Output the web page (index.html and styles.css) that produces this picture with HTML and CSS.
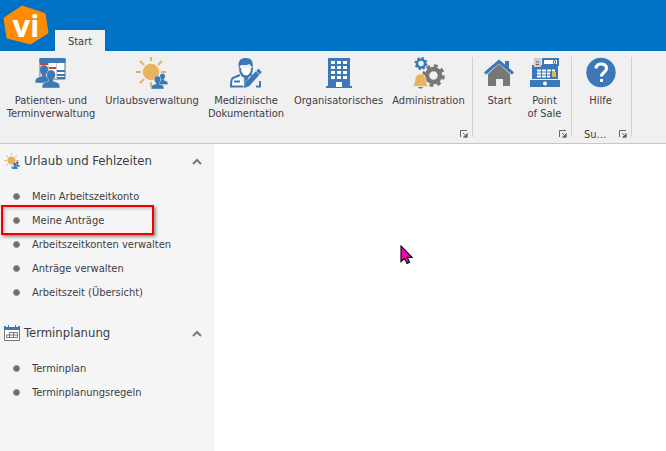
FILE: index.html
```
<!DOCTYPE html>
<html lang="de">
<head>
<meta charset="utf-8">
<title>vi</title>
<link rel="stylesheet" href="styles.css">
</head>
<body>
<svg class="defs" aria-hidden="true">
  <symbol id="person" viewBox="0 0 18 18">
    <path d="M9 0c3 0 4.600 2 4.400 5-.1 1.900-1 3.600-2.200 4.600v1.600c2.800.8 5.300 1.400 6 3 .6 1.400.6 2.800.6 3.800H.2c0-1 0-2.400.6-3.800.7-1.600 3.200-2.200 6-3V9.600C5.600 8.600 4.700 6.900 4.600 5 4.400 2 6 0 9 0z"/>
  </symbol>
  <symbol id="sun" viewBox="0 0 32 32">
    <circle cx="15" cy="15" r="8.200" fill="#e8b35f"/>
    <path d="M15 0v4M15 25v5M0 15h5M25 15h5M4 4l4 4M26 4l-4 4M4 26l4-4" stroke="#e8b35f" stroke-width="2"/>
    <g fill="#3b78b5" stroke="#f0f0f0" stroke-width=".5">
      <use href="#person" x="21" y="16" width="11" height="12"/>
      <use href="#person" x="15" y="19" width="13" height="13"/>
    </g>
  </symbol>
  <symbol id="launch" viewBox="0 0 8 8">
    <path d="M.5 7V.5H7M3 3l3.500 3.500M7 3.500V7H3.500" fill="none" stroke="#666"/>
    <path d="M7.500 3v4.500H3z" fill="#666"/>
  </symbol>
  <symbol id="chevron" viewBox="0 0 10 7">
    <path d="M1 6l4-4 4 4" fill="none" stroke="#777" stroke-width="2"/>
  </symbol>
</svg>

<header class="titlebar">
  <svg class="logo" viewBox="0 0 48 42" role="img" aria-label="vi">
    <path d="M20 2L43 9.500 46 29 28.500 40 5 34 2 14z" fill="#ff8c00" stroke="#ff8c00" stroke-linejoin="round"/>
    <text x="24" y="33" text-anchor="middle" class="logo-text">vi</text>
  </svg>
  <button class="tab" type="button">Start</button>
</header>

<nav class="ribbon" aria-label="Menüband">
  <section class="group group-main">
    <div class="tools">
      <button type="button" class="tool tool-l">
        <svg class="icon" viewBox="0 0 32 32">
          <path d="M5 2h25v20H5z" fill="#fff" stroke="#666"/>
          <path d="M4.500 1h26v5h-26z" fill="#3b78b5"/>
          <path d="M13.500 6v16M21.500 6v16" stroke="#ccc"/>
          <path d="M5 7h8M14 11h7" stroke="#cf432c" stroke-width="2"/>
          <path d="M22 14h8M22 18h8M22 21h8" stroke="#3b78b5" stroke-width="2"/>
          <g fill="#3b78b5" stroke="#f0f0f0" stroke-width=".4">
            <use href="#person" x="0" y="8" width="18" height="18"/>
            <use href="#person" x="7" y="13" width="18" height="18"/>
          </g>
        </svg>
        <span>Patienten- und<br>Terminverwaltung</span>
      </button>
      <button type="button" class="tool tool-l">
        <svg class="icon"><use href="#sun"/></svg>
        <span>Urlaubsverwaltung</span>
      </button>
      <button type="button" class="tool tool-m">
        <svg class="icon" viewBox="0 0 32 32">
          <path d="M10 11c0 5 2.500 8.500 6 8.500s6-3.500 6-8.500M10 18l-7 3c-2 1-2 5-2 8.500h12M21 18l4 2M26 29.500h4V24" fill="#fff" stroke="#3b78b5" stroke-width="2"/>
          <path d="M9 12C7 3 11 1 16 1s8 3 6.500 11c-1-3-2-4-3.500-5-2 1.500-6 1-8 1-1 1-1.500 2-2 4z" fill="#3b78b5"/>
          <path d="M11 18l5 4 5-4M16 20v4" fill="none" stroke="#3b78b5"/>
          <path d="M14.500 20h3l1.500 7-3 3-2-3z" fill="#3b78b5"/>
          <path d="M4 24.500h6" stroke="#3b78b5" stroke-width="2"/>
          <path d="M13 31.500l2-6L28.500 11.500l3.500 3.500L19 29.500z" fill="#3b78b5" stroke="#f0f0f0" stroke-width=".4"/>
          <path d="M26 14l4 4" stroke="#f0f0f0" stroke-width=".7"/>
        </svg>
        <span>Medizinische<br>Dokumentation</span>
      </button>
      <button type="button" class="tool tool-l">
        <svg class="icon" viewBox="0 0 32 32">
          <path d="M5 1h22v28h2v2H3v-2h2z" fill="#3b78b5"/>
          <path d="M8 5.500h16M8 10.500h16M8 15.500h16M8 20.500h16" stroke="#fff" stroke-width="3" stroke-dasharray="4 2"/>
          <path d="M13 25h6v5h-6z" fill="#fff"/>
        </svg>
        <span>Organisatorisches</span>
      </button>
      <button type="button" class="tool tool-m">
        <svg class="icon" viewBox="0 0 32 32">
          <circle cx="8" cy="6.500" r="4" fill="none" stroke="#3b78b5" stroke-width="2.500"/>
          <circle cx="8" cy="6.500" r="5.500" fill="none" stroke="#3b78b5" stroke-width="2" stroke-dasharray="2.160 2.160"/>
          <circle cx="20.500" cy="18.500" r="6.500" fill="none" stroke="#777" stroke-width="4.500"/>
          <circle cx="20.500" cy="18.500" r="9.800" fill="none" stroke="#777" stroke-width="3" stroke-dasharray="3.850 3.850"/>
          <path d="M7.500 17c4 0 5 3 5.500 6 .3 3 1 4.500 2.500 6.500H-.5c1.500-2 2.200-3.500 2.500-6.500.5-3 1.500-6 5.500-6z" fill="#e8b35f" stroke="#f0f0f0" stroke-width=".6"/>
          <path d="M5 30h5c-.5 2-4.500 2-5 0z" fill="#777"/>
        </svg>
        <span>Administration</span>
      </button>
    </div>
    <footer class="group-foot"><span></span><button type="button" class="launcher" aria-label="Optionen"><svg><use href="#launch"/></svg></button></footer>
  </section>

  <section class="group group-nav">
    <div class="tools">
      <button type="button" class="tool tool-s">
        <svg class="icon" viewBox="0 0 32 32">
          <path d="M4 17L15 7l11 10v12h-7v-7h-7v7H4z" fill="#777"/>
          <path d="M21 4h4v10l-4-4z" fill="#3b78b5"/>
          <path d="M1 16.500L15 4.500l14 12" fill="none" stroke="#3b78b5" stroke-width="3"/>
        </svg>
        <span>Start</span>
      </button>
      <button type="button" class="tool tool-s">
        <svg class="icon" viewBox="0 0 32 32">
          <path d="M14 2h15v6H14z" fill="#fff" stroke="#3b78b5" stroke-width="2"/>
          <path d="M3 8h26v14H3z" fill="#3b78b5"/>
          <path d="M5 1h7v9H5z" fill="#ccc"/>
          <path d="M7 5h3M7 7.500h3" stroke="#666"/>
          <ellipse cx="25.500" cy="5" rx="1.200" ry="1.700" fill="none" stroke="#333" stroke-width=".8"/>
          <path d="M8 13.500h18M8 16.500h13M8 19.500h13" stroke="#fff" stroke-width="2" stroke-dasharray="4 1"/>
          <path d="M23 15h4v5h-4z" fill="#e8b35f"/>
          <path d="M1 23h30v7H1z" fill="#3b78b5"/>
          <circle cx="16" cy="26.500" r="2" fill="#fff"/>
        </svg>
        <span>Point<br>of Sale</span>
      </button>
    </div>
    <footer class="group-foot"><span></span><button type="button" class="launcher" aria-label="Optionen"><svg><use href="#launch"/></svg></button></footer>
  </section>

  <section class="group group-help">
    <div class="tools">
      <button type="button" class="tool tool-s">
        <svg class="icon" viewBox="0 0 32 32">
          <circle cx="16" cy="15.500" r="14.700" fill="#3b78b5"/>
          <path d="M11 11.500c0-6 10.500-6 10.500 0 0 4-5 3.500-5 8" fill="none" stroke="#fff" stroke-width="3.200"/>
          <path d="M15 22h3v3h-3z" fill="#fff"/>
        </svg>
        <span>Hilfe</span>
      </button>
    </div>
    <footer class="group-foot"><span>Su…</span><button type="button" class="launcher" aria-label="Optionen"><svg><use href="#launch"/></svg></button></footer>
  </section>
</nav>

<div class="workspace">
  <aside class="sidebar">
    <section>
      <button type="button" class="section-head" aria-expanded="true">
        <svg class="section-icon"><use href="#sun"/></svg>
        <span>Urlaub und Fehlzeiten</span>
        <svg class="chevron"><use href="#chevron"/></svg>
      </button>
      <ul class="links">
        <li><a href="#konto">Mein Arbeitszeitkonto</a></li>
        <li><a href="#antraege" class="marked">Meine Anträge</a></li>
        <li><a href="#konten">Arbeitszeitkonten verwalten</a></li>
        <li><a href="#verwalten">Anträge verwalten</a></li>
        <li><a href="#uebersicht">Arbeitszeit (Übersicht)</a></li>
      </ul>
    </section>
    <section>
      <button type="button" class="section-head" aria-expanded="true">
        <svg class="section-icon" viewBox="0 0 16 16">
          <path d="M.5 3v12.500h15V3" fill="#fff" stroke="#777"/>
          <path d="M0 1h2v1h2V0h1v2h6V0h1v2h2V1h2v4H0z" fill="#3b78b5"/>
          <path d="M5.500 7.500h8v5h-11v-2.500h11M5.500 7.500v5M9.500 7.500v5" fill="none" stroke="#777"/>
        </svg>
        <span>Terminplanung</span>
        <svg class="chevron"><use href="#chevron"/></svg>
      </button>
      <ul class="links">
        <li><a href="#plan">Terminplan</a></li>
        <li><a href="#regeln">Terminplanungsregeln</a></li>
      </ul>
    </section>
  </aside>
  <main class="content">
    <svg class="cursor" viewBox="0 0 13 20" aria-hidden="true">
      <path d="M1 1v15.500l3.500-3.300 2.500 5.300 2.500-1.200-2.300-5H12z" fill="#ff00b4" stroke="#111" stroke-width="1.200"/>
    </svg>
  </main>
</div>
</body>
</html>
```

FILE: styles.css
```
*,
*::before,
*::after {
  box-sizing: border-box;
}

body {
  display: flex;
  flex-direction: column;
  min-height: 100vh;
  margin: 0;
  background: #fff;
  color: #3c3c46;
  font: 11px/13px "DejaVu Sans Condensed", Tahoma, sans-serif;
}

button {
  margin: 0;
  padding: 0;
  border: 0;
  background: none;
  color: inherit;
  font: inherit;
}

svg {
  display: block;
  flex: none;
}

.defs {
  position: absolute;
  width: 0;
  height: 0;
}

.titlebar {
  display: flex;
  align-items: flex-end;
  gap: 5px;
  height: 51px;
  padding-left: 2px;
  background: #0072c6;
}

.logo {
  width: 48px;
  height: 42px;
  align-self: flex-start;
  margin-top: 4px;
}

.logo-text {
  fill: #fff;
  font: bold 31px "Open Sans", sans-serif;
}

.tab {
  width: 50px;
  height: 21px;
  padding-top: 2px;
  background: #f0f0f0;
}

.ribbon {
  display: flex;
  padding: 6px 0;
  border-bottom: 1px solid #c6c6c6;
  background: #f0f0f0;
}

.group {
  display: flex;
  flex-direction: column;
  justify-content: space-between;
  height: 80px;
  padding: 0 4px 0 2px;
  border-right: 1px solid #d0d0d0;
}

.group-nav {
  padding-left: 4px;
}

.group-help {
  width: 60px;
}

.group-help .tools {
  justify-content: center;
}

.group-help .group-foot {
  padding-left: 10px;
}

.tools {
  display: flex;
}

.tool {
  display: flex;
  flex-direction: column;
  align-items: center;
  gap: 5px;
  white-space: nowrap;
}

.tool-l {
  width: 98px;
}

.tool-l + .tool-l {
  width: 104px;
}

.tool-m {
  width: 84px;
}

.tool-m + .tool-l {
  width: 101px;
}

.tool-l + .tool-m:last-child {
  width: 79px;
}

.tool-s {
  width: 45px;
}

.icon {
  width: 32px;
  height: 32px;
}

.group-foot {
  display: flex;
  align-items: center;
  justify-content: space-between;
  height: 6px;
}

.launcher svg {
  width: 8px;
  height: 8px;
}

.workspace {
  display: flex;
  flex: 1;
}

.sidebar {
  display: flex;
  flex-direction: column;
  gap: 12px;
  width: 214px;
  background: #f5f5f5;
}

.section-head {
  display: flex;
  align-items: center;
  gap: 4px;
  width: 100%;
  height: 34px;
  padding: 0 12px 0 4px;
  font-size: 13px;
  line-height: 18px;
}

.section-icon {
  width: 16px;
  height: 16px;
}

.chevron {
  width: 10px;
  height: 7px;
  margin-left: auto;
}

.links {
  margin: 6px 0 0;
  padding: 0;
  list-style: none;
}

.links a {
  position: relative;
  display: flex;
  align-items: center;
  gap: 12px;
  height: 24px;
  padding-left: 13px;
  color: inherit;
  text-decoration: none;
}

.links a::before {
  content: "";
  width: 7px;
  height: 7px;
  border: 1px solid #8c8c8c;
  border-radius: 50%;
  background: #6c6c6c;
}

.marked::after {
  content: "";
  position: absolute;
  inset: -3px 60px -3px 1px;
  border: 2px solid #f00000;
  box-shadow: 2px 2px 3px #0006, inset 2px 2px 3px #0003;
}

.content {
  position: relative;
  flex: 1;
}

.cursor {
  position: absolute;
  left: 186px;
  top: 101px;
  width: 13px;
  height: 20px;
}
```
